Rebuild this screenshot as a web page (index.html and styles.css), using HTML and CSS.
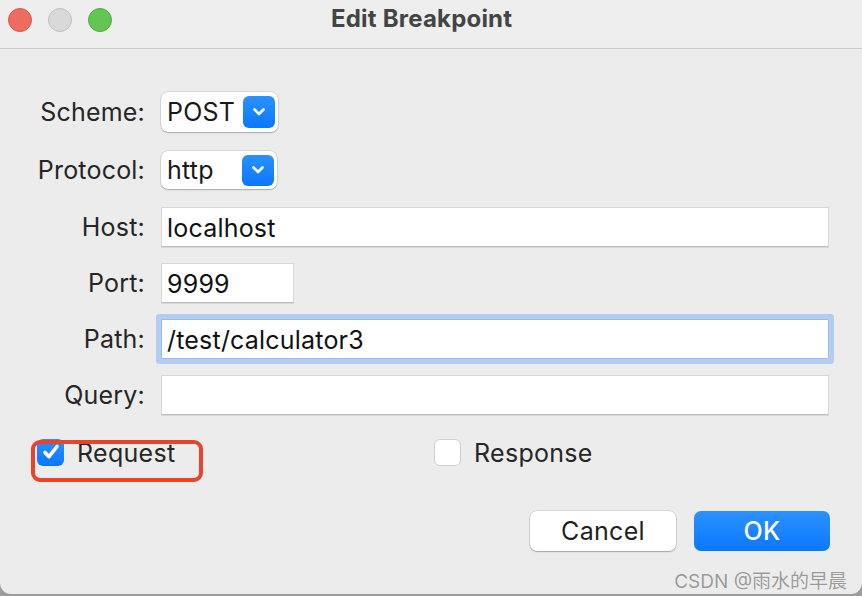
FILE: index.html
```html
<!DOCTYPE html>
<html>
<head>
    <title>Edit Breakpoint</title>
    <link rel="stylesheet" href="styles.css">
</head>
<body>
    <div class="window">
        <div class="titlebar">
            <div class="lights">
                <span class="light close"></span>
                <span class="light minimize"></span>
                <span class="light zoom"></span>
            </div>
            <div class="title">Edit Breakpoint</div>
        </div>

        <form class="fields">
            <label class="label">Scheme:</label>
            <div class="select scheme">
                <span class="value">POST</span>
                <span class="arrow">
                    <svg width="16" height="12" viewBox="0 0 16 12"><path d="M3.5 3.5l4.5 4.5 4.5-4.5" fill="none" stroke="#fff" stroke-width="2.6" stroke-linecap="round" stroke-linejoin="round"/></svg>
                </span>
            </div>

            <label class="label">Protocol:</label>
            <div class="select protocol">
                <span class="value">http</span>
                <span class="arrow">
                    <svg width="16" height="12" viewBox="0 0 16 12"><path d="M3.5 3.5l4.5 4.5 4.5-4.5" fill="none" stroke="#fff" stroke-width="2.6" stroke-linecap="round" stroke-linejoin="round"/></svg>
                </span>
            </div>

            <label class="label">Host:</label>
            <div class="field">localhost</div>

            <label class="label">Port:</label>
            <div class="field port">9999</div>

            <label class="label">Path:</label>
            <div class="field focused">/test/calculator3</div>

            <label class="label">Query:</label>
            <div class="field"></div>
        </form>

        <div class="checks">
            <div class="check">
                <span class="box checked">
                    <svg width="22" height="22" viewBox="0 0 22 22"><path d="M5 11.5l4 4.2L17 5.5" fill="none" stroke="#fff" stroke-width="3.6" stroke-linecap="round" stroke-linejoin="round"/></svg>
                </span>
                <span class="check-label">Request</span>
                <span class="highlight"></span>
            </div>
            <div class="check">
                <span class="box"></span>
                <span class="check-label">Response</span>
            </div>
        </div>

        <div class="buttons">
            <button type="button" class="btn cancel">Cancel</button>
            <button type="button" class="btn ok">OK</button>
        </div>

        <div class="watermark">CSDN @雨水的早晨</div>
    </div>
</body>
</html>
```

FILE: styles.css
```css
body {
    margin: 0;
    background: #9c9c9c;
    font-family: Inter, "Liberation Sans", "Noto Sans CJK SC", sans-serif;
}
.window {
    width: 862px;
    height: 594px;
    background: #ececec;
    border-radius: 0 0 11px 11px;
    overflow: hidden;
    position: relative;
}

/* title bar */
.titlebar {
    height: 48px;
    display: flex;
    align-items: flex-start;
    border-bottom: 1px solid #cbcbcb;
    background: #eeeeee;
}
.lights {
    display: flex;
    gap: 16px;
    padding: 8px 0 0 8px;
}
.light {
    width: 22px;
    height: 22px;
    border-radius: 50%;
    border: 1px solid;
}
.close {
    background: #ee6b60;
    border-color: #d5574c;
}
.minimize {
    background: #d9d9d9;
    border-color: #bfbfbf;
}
.zoom {
    background: #62c554;
    border-color: #4fac42;
}
.title {
    margin-left: 219px;
    padding-top: 4px;
    font-size: 24px;
    line-height: 30px;
    font-weight: 700;
    letter-spacing: 0.2px;
    color: #444444;
}

/* form */
.fields {
    display: grid;
    grid-template-columns: 145px 668px;
    grid-template-rows: 58px 57px 56px 56px 56px 40px;
    column-gap: 16px;
    margin: 43px 0 0 0;
    font-size: 25px;
    letter-spacing: 0.2px;
}
.label {
    text-align: right;
    color: #262626;
    height: 40px;
    line-height: 40px;
}
.select {
    width: 117px;
    height: 40px;
    background: #fff;
    border-radius: 7px;
    box-shadow: 0 0 0 0.5px rgba(0, 0, 0, 0.16), 0 1px 1.5px rgba(0, 0, 0, 0.22);
    display: flex;
    align-items: center;
    justify-content: space-between;
    padding: 0 3px 0 6px;
    box-sizing: border-box;
    color: #1a1a1a;
}
.select.protocol {
    width: 116px;
    height: 38px;
    margin-top: 1px;
}
.arrow {
    width: 32px;
    height: 32px;
    border-radius: 6px;
    background: linear-gradient(#2a91ff, #0a78fe);
    display: flex;
    align-items: center;
    justify-content: center;
}
.protocol .arrow {
    height: 31px;
}
.field {
    height: 40px;
    line-height: 40px;
    background: #fff;
    border: 1px solid #d7d7d7;
    border-bottom-color: #bcbcbc;
    box-sizing: border-box;
    padding-left: 5px;
    color: #111;
    box-shadow: 0 1px 0 rgba(0, 0, 0, 0.08);
}
.field.port {
    width: 133px;
}
.field.focused {
    border-color: #9ab9e8;
    box-shadow: 0 0 0 1px #b5cff1, 0 0 0 5px #b3cdf0;
    border-radius: 1px;
}

/* checkboxes */
.checks {
    display: grid;
    grid-template-columns: 397px 1fr;
    padding-left: 37px;
    margin-top: 23px;
    font-size: 25px;
    letter-spacing: 0.3px;
    color: #262626;
}
.check {
    display: flex;
    align-items: center;
    gap: 13px;
    height: 28px;
    position: relative;
}
.box {
    width: 27px;
    height: 27px;
    border-radius: 6px;
    background: #fff;
    box-sizing: border-box;
    border: 1px solid #cfcfcf;
    display: flex;
    align-items: center;
    justify-content: center;
}
.box.checked {
    background: linear-gradient(#2a91ff, #0a78fe);
    border: none;
}
.check-label {
    margin-top: 2px;
}
.highlight {
    position: absolute;
    left: -6px;
    top: 2px;
    width: 172px;
    height: 42px;
    border: 4px solid #ea432b;
    border-radius: 9px;
    box-sizing: border-box;
}

/* buttons */
.buttons {
    display: flex;
    justify-content: flex-end;
    gap: 18px;
    padding-right: 32px;
    margin-top: 45px;
}
.btn {
    height: 40px;
    border: none;
    border-radius: 7px;
    font-family: Inter, "Liberation Sans", sans-serif;
    font-size: 25px;
    letter-spacing: 0.3px;
}
.cancel {
    width: 146px;
    background: #fff;
    color: #1f1f1f;
    box-shadow: 0 0 0 0.5px rgba(0, 0, 0, 0.16), 0 1px 1.5px rgba(0, 0, 0, 0.25);
}
.ok {
    width: 136px;
    background: linear-gradient(#2b92ff, #0a78fe);
    color: #fff;
    font-weight: 500;
}

.watermark {
    text-align: right;
    padding-right: 15px;
    margin-top: 15px;
    font-size: 19px;
    color: #9a9a9a;
    text-shadow: 0 0 1px #fff;
}
```
